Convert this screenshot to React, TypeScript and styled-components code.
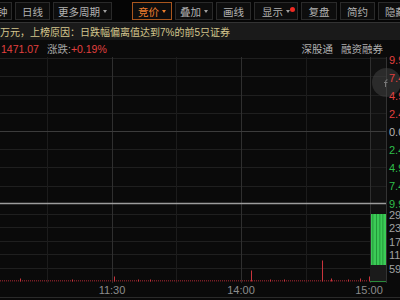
import React from 'react';
import styled, { createGlobalStyle } from 'styled-components';

const GlobalStyle = createGlobalStyle`
  html, body {
    margin: 0;
    padding: 0;
    background: #0a0a0a;
  }
  body {
    font-family: 'Liberation Sans', 'Noto Sans CJK SC', sans-serif;
    overflow: hidden;
  }
`;

const Page = styled.div`
  width: 400px;
  height: 300px;
  overflow: hidden;
  background: #0a0a0a;
  display: flex;
  flex-direction: column;
`;

const Toolbar = styled.div`
  height: 22px;
  flex-shrink: 0;
  display: flex;
  align-items: center;
  gap: 3px;
  margin-left: -18px;
  background: #050505;
  border-bottom: 1px solid #333333;
`;

const ToolButton = styled.div<{ $w: number; $active?: boolean; $space?: number }>`
  position: relative;
  flex-shrink: 0;
  box-sizing: border-box;
  width: ${p => p.$w}px;
  height: 18px;
  margin-left: ${p => p.$space ?? 0}px;
  display: flex;
  align-items: center;
  justify-content: center;
  gap: 3px;
  border: 1px solid ${p => (p.$active ? '#a9561e' : '#2a2a2a')};
  background: #0d0d0d;
  color: ${p => (p.$active ? '#ee7f2d' : '#b2b2b2')};
  font-size: 10.5px;
  white-space: nowrap;
`;

const Caret = styled.span<{ $active?: boolean }>`
  width: 0;
  height: 0;
  border-left: 2.5px solid transparent;
  border-right: 2.5px solid transparent;
  border-top: 3px solid ${p => (p.$active ? '#ee7f2d' : '#a0a0a0')};
`;

const RedDot = styled.span`
  position: absolute;
  top: 4px;
  right: 2px;
  width: 5px;
  height: 5px;
  border-radius: 50%;
  background: #f02a22;
`;

const Notice = styled.div`
  height: 17px;
  flex-shrink: 0;
  background: #1a1a1a;
  color: #d4c68d;
  font-size: 10px;
  display: flex;
  align-items: center;
  white-space: nowrap;
`;

const InfoRow = styled.div`
  height: 17px;
  flex-shrink: 0;
  display: flex;
  align-items: center;
  padding: 0 17px 0 1px;
  font-size: 10.5px;
  white-space: nowrap;
`;

const Price = styled.span`
  color: #e2403f;
  margin-right: 8px;
`;

const Label = styled.span`
  color: #a4a4a4;
`;

const Change = styled.span`
  color: #e2403f;
  flex: 1;
`;

const Links = styled.div`
  display: flex;
  gap: 8px;
  color: #b0b0b0;
`;

const ChartBody = styled.div`
  flex-shrink: 0;
  display: flex;
  flex-direction: column;
`;

const Upper = styled.div`
  position: relative;
  display: flex;
  height: 226px;
`;

const Plot = styled.div`
  width: 387px;
  flex-shrink: 0;
  display: flex;
  flex-direction: column;
`;

const Axis = styled.div`
  position: relative;
  z-index: 2;
  flex: 1;
  display: flex;
  flex-direction: column;
  padding-left: 2px;
  font-size: 11px;
`;

const TickColumn = styled.div<{ $h: number; $top: number; $bottom: number }>`
  height: ${p => p.$h}px;
  box-sizing: border-box;
  padding: ${p => p.$top}px 0 ${p => p.$bottom}px;
  display: flex;
  flex-direction: column;
  justify-content: space-between;
`;

const Tick = styled.div<{ $color: string }>`
  height: 0;
  display: flex;
  align-items: center;
  color: ${p => p.$color};
  white-space: nowrap;
`;

const FloatBall = styled.div`
  position: absolute;
  z-index: 1;
  left: 372px;
  top: 11px;
  width: 29px;
  height: 29px;
  border-radius: 50%;
  background: rgba(70, 70, 70, 0.5);
  display: flex;
  align-items: center;
  padding-left: 12px;
  box-sizing: border-box;
`;

const TimeRow = styled.div`
  position: relative;
  height: 14px;
  border-bottom: 1px solid #2a2a2a;
  font-size: 11px;
  color: #8c8c8c;
`;

const TimeTick = styled.span`
  position: absolute;
  top: 50%;
  transform: translate(-50%, -50%);
  white-space: nowrap;
`;

const VX = [47, 112, 176, 241, 306, 370];
const MAJOR = [112, 241, 370];

const PRICE_TICKS = [
  { v: '9.9', c: '#e2403f' },
  { v: '7.4', c: '#e2403f' },
  { v: '4.9', c: '#e2403f' },
  { v: '2.4', c: '#e2403f' },
  { v: '0.0', c: '#b4b4b4' },
  { v: '2.4', c: '#2fbf4a' },
  { v: '4.9', c: '#2fbf4a' },
  { v: '7.4', c: '#2fbf4a' },
  { v: '9.9', c: '#2fbf4a' },
];

const VOL_TICKS = ['29', '23', '17', '11', '59'];

const SPIKES: [number, number][] = [
  [20, 3], [72, 2], [114, 5], [138, 2], [150, 2], [251, 11], [270, 2],
  [284, 2], [322, 21], [331, 3], [348, 2], [360, 3], [369, 5],
];

const TIMES = [
  { t: '11:30', x: 112 },
  { t: '14:00', x: 241 },
  { t: '15:00', x: 369 },
];

const buttons = [
  { label: '分钟', w: 30 },
  { label: '日线', w: 35 },
  { label: '更多周期', w: 59, caret: true },
  { label: '竞价', w: 40, caret: true, active: true, space: 17 },
  { label: '叠加', w: 38, caret: true },
  { label: '画线', w: 35 },
  { label: '显示', w: 44, caret: true, dot: true },
  { label: '复盘', w: 36 },
  { label: '简约', w: 35 },
  { label: '隐藏', w: 35 },
];

const GridLines: React.FC<{ h: number; rows: number[] }> = ({ h, rows }) => (
  <>
    <rect x={370} y={0} width={16} height={h} fill="#111111" />
    {rows.map(y => (
      <line key={y} x1={0} x2={386} y1={y + 0.5} y2={y + 0.5} stroke="#1f1f1f" />
    ))}
    {VX.map(x => (
      <line
        key={x}
        x1={x + 0.5}
        x2={x + 0.5}
        y1={0}
        y2={h}
        stroke={MAJOR.includes(x) ? '#2f2f2f' : '#1c1c1c'}
      />
    ))}
    <line x1={386.5} x2={386.5} y1={0} y2={h} stroke="#333333" />
  </>
);

const PriceChart = () => (
  <svg width={387} height={148} style={{ display: 'block' }}>
    <rect width={387} height={148} fill="#0a0a0a" />
    <GridLines h={148} rows={[1, 19, 38, 56, 92, 110, 129]} />
    <line x1={0} x2={386} y1={74.5} y2={74.5} stroke="#3c3c3c" />
    <line x1={0} x2={386} y1={146.5} y2={146.5} stroke="#9c9c9c" strokeWidth={1.5} />
  </svg>
);

const VolumeChart = () => {
  const dots: number[] = [];
  for (let x = 0; x < 368; x += 2) dots.push(x);
  return (
    <svg width={387} height={78} style={{ display: 'block' }}>
      <rect width={387} height={78} fill="#0a0a0a" />
      <GridLines h={78} rows={[9, 22, 36, 49, 63]} />
      <rect x={370} y={60} width={16} height={16} fill="#1b1b1b" />
      <rect x={371} y={9} width={15} height={51} fill="#3bcb56" />
      {[372.5, 376, 379.5, 382.5].map(x => (
        <rect key={x} x={x} y={9} width={0.8} height={51} fill="#1e8a33" />
      ))}
      <line x1={370} x2={386} y1={76.5} y2={76.5} stroke="#2a8a3a" />
      {dots.map(x => (
        <rect key={x} x={x} y={75} width={1} height={1.5} fill="#7a1e25" />
      ))}
      {SPIKES.map(([x, h]) => (
        <rect key={x} x={x} y={76.5 - h} width={1} height={h} fill="#c9343c" />
      ))}
    </svg>
  );
};

const App: React.FC = () => {
  return (
    <Page>
      <GlobalStyle />
      <Toolbar>
        {buttons.map(b => (
          <ToolButton key={b.label} $w={b.w} $active={b.active} $space={b.space}>
            {b.label}
            {b.caret && <Caret $active={b.active} />}
            {b.dot && <RedDot />}
          </ToolButton>
        ))}
      </Toolbar>

      <Notice>万元，上榜原因：日跌幅偏离值达到7%的前5只证券</Notice>

      <InfoRow>
        <Price>1471.07</Price>
        <Label>涨跌:</Label>
        <Change>+0.19%</Change>
        <Links>
          <span>深股通</span>
          <span>融资融券</span>
        </Links>
      </InfoRow>

      <ChartBody>
        <Upper>
          <Plot>
            <PriceChart />
            <VolumeChart />
          </Plot>
          <FloatBall>
            <svg width={5} height={8}>
              <path d="M1.5 8 V2.5 Q1.5 0.8 3.5 0.8 M0 3.5 H3.5" stroke="#7a7a7a" strokeWidth={1} fill="none" />
            </svg>
          </FloatBall>
          <Axis>
            <TickColumn $h={148} $top={2.5} $bottom={1.5}>
              {PRICE_TICKS.map((t, i) => (
                <Tick key={i} $color={t.c}>{t.v}</Tick>
              ))}
            </TickColumn>
            <TickColumn $h={78} $top={9.5} $bottom={14.5}>
              {VOL_TICKS.map(v => (
                <Tick key={v} $color="#a2a2a2">{v}</Tick>
              ))}
            </TickColumn>
          </Axis>
        </Upper>
        <TimeRow>
          {TIMES.map(t => (
            <TimeTick key={t.t} style={{ left: t.x }}>{t.t}</TimeTick>
          ))}
        </TimeRow>
      </ChartBody>
    </Page>
  );
};

export default App;
